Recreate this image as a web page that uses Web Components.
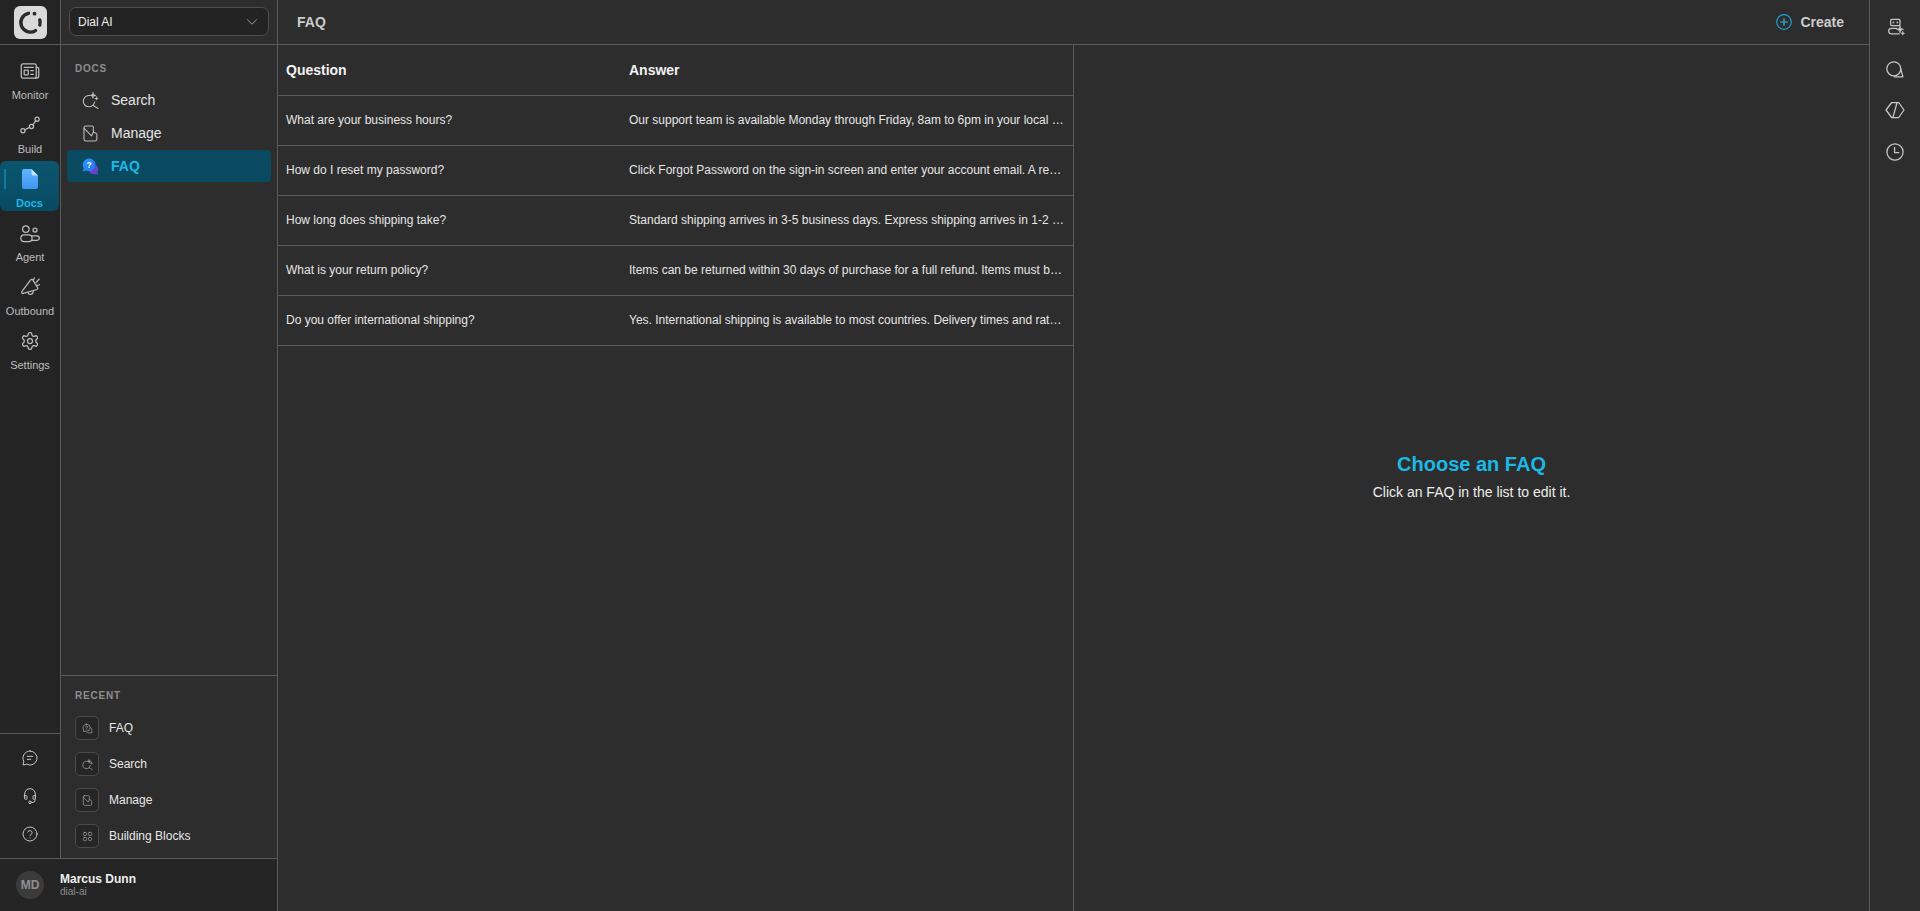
<!DOCTYPE html>
<html lang="en"><head><meta charset="utf-8"><title>FAQ</title>
<style>
html,body{margin:0;height:100%;overflow:hidden;background:#2d2d2d;color:#eee;font-family:"Liberation Sans",Arial,sans-serif}
</style></head><body>
<x-app>
  <x-left slot="left">
    <x-rail slot="rail">
      <x-rail-item icon="monitor">Monitor</x-rail-item>
      <x-rail-item icon="build">Build</x-rail-item>
      <x-rail-item icon="docs" active>Docs</x-rail-item>
      <x-rail-item icon="agent">Agent</x-rail-item>
      <x-rail-item icon="outbound">Outbound</x-rail-item>
      <x-rail-item icon="settings">Settings</x-rail-item>
      <x-rail-foot slot="foot"></x-rail-foot>
    </x-rail>
    <x-panel slot="panel">
      <x-nav-item icon="search">Search</x-nav-item>
      <x-nav-item icon="manage">Manage</x-nav-item>
      <x-nav-item icon="faq" active>FAQ</x-nav-item>
      <x-recent-item slot="recent" icon="chat-q">FAQ</x-recent-item>
      <x-recent-item slot="recent" icon="search">Search</x-recent-item>
      <x-recent-item slot="recent" icon="manage">Manage</x-recent-item>
      <x-recent-item slot="recent" icon="blocks">Building Blocks</x-recent-item>
    </x-panel>
    <x-user slot="user" name="Marcus Dunn" org="dial-ai" initials="MD"></x-user>
  </x-left>
  <x-topbar slot="top" title="FAQ"></x-topbar>
  <x-faq-table slot="table">
    <x-faq-row q="What are your business hours?" a="Our support team is available Monday through Friday, 8am to 6pm in your local time zone, excluding public holidays."></x-faq-row>
    <x-faq-row q="How do I reset my password?" a="Click Forgot Password on the sign-in screen and enter your account email. A reset link will arrive within a few minutes."></x-faq-row>
    <x-faq-row q="How long does shipping take?" a="Standard shipping arrives in 3-5 business days. Express shipping arrives in 1-2 business days after dispatch."></x-faq-row>
    <x-faq-row q="What is your return policy?" a="Items can be returned within 30 days of purchase for a full refund. Items must be unused and in original packaging."></x-faq-row>
    <x-faq-row q="Do you offer international shipping?" a="Yes. International shipping is available to most countries. Delivery times and rates vary by destination."></x-faq-row>
  </x-faq-table>
  <x-empty slot="detail" heading="Choose an FAQ" text="Click an FAQ in the list to edit it."></x-empty>
  <x-right-rail slot="right"></x-right-rail>
</x-app>
<script>
const S='fill="none" stroke="currentColor" stroke-width="1.5" stroke-linecap="round" stroke-linejoin="round"';
const ICONS={
monitor:`<svg viewBox="0 0 24 24" ${S}><rect x="1.5" y="3.5" width="18" height="17" rx="2"/><path d="M19.5 7.5h1.2a1.8 1.8 0 0 1 1.8 1.8v8.7a2.5 2.5 0 0 1-2.5 2.5h-1.5"/><path d="M5 7.5h11"/><rect x="5" y="11" width="5" height="5.5" rx=".5"/><path d="M13 11.5h3M13 16h3"/></svg>`,
build:`<svg viewBox="0 0 24 24" ${S}><circle cx="3.5" cy="18.8" r="2.5"/><circle cx="13.8" cy="13.8" r="2.5"/><circle cx="20.500" cy="5" r="2.500"/><path d="M5.800 17.700l5.700-2.800M15.300 11.800l3.700-4.800"/></svg>`,
docs:`<svg viewBox="0 0 16 20"><defs><linearGradient id="dg" x1="0" y1="0" x2="0" y2="1"><stop offset="0" stop-color="#5fb5ff"/><stop offset="1" stop-color="#3f97f2"/></linearGradient></defs><path d="M2 0h7.5L16 6.5V18a2 2 0 0 1-2 2H2a2 2 0 0 1-2-2V2a2 2 0 0 1 2-2z" fill="url(#dg)"/><path d="M9.500 0L16 6.500h-5a1.500 1.500 0 0 1-1.500-1.500z" fill="#bfe0ff"/></svg>`,
agent:`<svg viewBox="0 0 24 24" ${S}><circle cx="7" cy="7.300" r="3.900"/><circle cx="18" cy="8.400" r="2.400"/><rect x="1" y="14.200" width="13.500" height="8" rx="4"/><path d="M14.500 15.500h6a2.600 2.600 0 0 1 0 5.200h-6"/></svg>`,
outbound:`<svg viewBox="0 0 24 24" ${S}><path d="M12.800 3.500L2.400 17.300a1.500 1.500 0 0 0 1.600 2.400L20.300 15a1.500 1.500 0 0 0 .6-2.500L15.200 3.300a1.500 1.500 0 0 0-2.400.2z"/><path d="M9.500 18.800a3.200 3.200 0 0 0 6.200-1.400"/><path d="M17.200 1l-1 3M23 2.500l-3.500 3.800M23.500 9.300l-3 .7"/></svg>`,
settings:`<svg viewBox="0 0 24 24" ${S}><path d="M12.220 2h-.44a2 2 0 0 0-2 2v.18a2 2 0 0 1-1 1.730l-.43.250a2 2 0 0 1-2 0l-.15-.080a2 2 0 0 0-2.730.730l-.22.380a2 2 0 0 0 .73 2.730l.15.100a2 2 0 0 1 1 1.720v.51a2 2 0 0 1-1 1.740l-.15.090a2 2 0 0 0-.73 2.730l.22.380a2 2 0 0 0 2.730.730l.15-.080a2 2 0 0 1 2 0l.43.250a2 2 0 0 1 1 1.730V20a2 2 0 0 0 2 2h.44a2 2 0 0 0 2-2v-.18a2 2 0 0 1 1-1.730l.43-.250a2 2 0 0 1 2 0l.15.080a2 2 0 0 0 2.730-.730l.22-.390a2 2 0 0 0-.73-2.730l-.15-.080a2 2 0 0 1-1-1.740v-.5a2 2 0 0 1 1-1.740l.15-.090a2 2 0 0 0 .73-2.730l-.22-.380a2 2 0 0 0-2.730-.730l-.15.080a2 2 0 0 1-2 0l-.43-.250a2 2 0 0 1-1-1.730V4a2 2 0 0 0-2-2z"/><circle cx="12" cy="12" r="3"/></svg>`,
search:`<svg viewBox="0 0 24 24" ${S}><path d="M11 5A8 8 0 1 0 17.800 14"/><path d="M15.500 18.700l7 4.500"/><path d="M15.500 .5l1.100 3.200 3.200 1.100-3.200 1.100-1.100 3.200-1.100-3.200-3.200-1.100 3.200-1.100z" fill="currentColor" stroke-width=".7"/><path d="M20.500 6.500l.7 1.900 1.900.7-1.900.7-.7 1.900-.7-1.900-1.900-.7 1.900-.7z" fill="currentColor" stroke-width=".6"/></svg>`,
manage:`<svg viewBox="0 0 24 24" ${S}><path d="M5 1.500h9.500a1.500 1.500 0 0 1 1.500 1.500v7l3.800 1.500a2 2 0 0 1 1.200 2V20a2.500 2.500 0 0 1-2.500 2.500H5.300A2.500 2.500 0 0 1 2.800 20V3.700A2.200 2.200 0 0 1 5 1.500z"/><path d="M3 4.800L13.500 15.500l2.500-5.500"/></svg>`,
faq:`<svg viewBox="0 0 24 24"><defs><linearGradient id="fg" x1="0" y1="0" x2="1" y2="1"><stop offset="0" stop-color="#2a9bff"/><stop offset="1" stop-color="#2a6ff0"/></linearGradient></defs><path d="M15.500 8.500a7.500 7.500 0 0 1 7.500 7.600c0 2-.7 3.600-1.800 4.800L23.500 22.800H15.500A7.200 7.200 0 0 1 15.500 8.500z" fill="#6a42c8"/><path d="M10 .8a9 9 0 1 1-4.300 16.900L1 19 2.400 14.300A9 9 0 0 1 10 .8z" fill="url(#fg)"/><text x="10" y="14" font-family="Liberation Sans" font-size="12" font-weight="700" text-anchor="middle" fill="#fff">?</text></svg>`,
'chat-q':`<svg viewBox="0 0 24 24" ${S}><path d="M10 2.500a7.800 7.800 0 0 1 7.800 7.800A7.800 7.800 0 0 1 10 18H2.500l1.200-3A7.800 7.800 0 0 1 10 2.500z"/><path d="M19.500 10.500a5.800 5.800 0 0 1 2 4.500v6.500H14a6 6 0 0 1-3-1"/><path d="M8 8.500a2 2 0 1 1 3 1.700c-.7.400-1 .8-1 1.500M10 14.300v.1"/></svg>`,
blocks:`<svg viewBox="0 0 24 24" ${S}><rect x="3" y="3" width="7" height="7" rx="3"/><rect x="14" y="3" width="7" height="7" rx="2"/><rect x="3" y="14" width="7" height="7" rx="2"/><rect x="14" y="14" width="7" height="7" rx="3"/></svg>`,
comment:`<svg viewBox="0 0 24 24" ${S}><path d="M12 1.500a10.500 10.500 0 1 1-4.800 19.800L1.500 22.500 2.700 17A10.500 10.500 0 0 1 12 1.500z"/><path d="M8 9.500h8M8 14h5"/></svg>`,
headset:`<svg viewBox="0 0 24 24" ${S} stroke-width="1.300"><path d="M4 15V9a8 8 0 0 1 16 0v6"/><path d="M4 11.500h2.500a1 1 0 0 1 1 1v3.500a1 1 0 0 1-1 1H5a1 1 0 0 1-1-1zM20 11.500h-2.500a1 1 0 0 0-1 1v3.500a1 1 0 0 0 1 1H19a1 1 0 0 0 1-1z"/><path d="M19.500 17v1.500a3 3 0 0 1-3 3H14"/><circle cx="12" cy="21.500" r="2"/></svg>`,
help:`<svg viewBox="0 0 24 24" ${S}><circle cx="12" cy="12" r="10.500"/><path d="M8.800 9a3.300 3.300 0 0 1 6.400 1c0 2.200-3.200 2.600-3.200 4.500M12 18v.1"/></svg>`,
plus:`<svg viewBox="0 0 16 16" fill="none" stroke="#1ea0cf" stroke-width="1.200" stroke-linecap="round"><circle cx="8" cy="8" r="7.300"/><path d="M8 4.500v7M4.500 8h7" stroke="#2fb1e0"/></svg>`,
bot:`<svg viewBox="0 0 24 24" ${S}><rect x="6.800" y="2.800" width="11.200" height="7.500" rx="1.300"/><path d="M10 6.500h.1M14.800 6.500h.1" stroke-width="2"/><path d="M14 13.500H7.800a3.300 3.300 0 0 0 0 6.800H17"/><path d="M18 10.500l1.100 3.200 3.200 1.100-3.200 1.100-1.100 3.200-1.100-3.200-3.200-1.100 3.200-1.100z" fill="currentColor" stroke-width=".7"/><path d="M21.300 17.300l.6 1.700 1.700.6-1.700.6-.6 1.700-.6-1.700-1.700-.6 1.700-.6z" fill="currentColor" stroke-width=".6"/></svg>`,
bubbles:`<svg viewBox="0 0 24 24" ${S}><circle cx="10.600" cy="11.800" r="8.400"/><path d="M18.800 11.500l2.700 10H11"/></svg>`,
code:`<svg viewBox="0 0 24 24" ${S}><path d="M8 3h8.500L22.800 12l-6.300 9H8L1.200 12z"/><path d="M14.500 3L9.500 21"/></svg>`,
clock:`<svg viewBox="0 0 24 24" ${S}><circle cx="12" cy="12" r="9.700"/><path d="M11.500 6.500v6.300h5"/></svg>`,
chevron:`<svg viewBox="0 0 12 12" fill="none" stroke="#9a9a9a" stroke-width="1" stroke-linecap="round" stroke-linejoin="round"><path d="M1.500 3.800L6 8.200l4.500-4.400"/></svg>`,
logo:`<svg viewBox="0 0 33 33"><rect width="33" height="33" rx="6" fill="#d9d9d9"/><g fill="none" stroke="#2a2a2a" stroke-width="3.400" stroke-linecap="round"><path d="M14.500 7.300A9.500 9.500 0 1 0 21.500 24.600"/><path d="M25.800 14A9.500 9.500 0 0 1 25.800 19"/></g><circle cx="20.500" cy="7.700" r="1.900" fill="#2a2a2a"/></svg>`
};
customElements.define('x-icon',class extends HTMLElement{
  connectedCallback(){ if(this.shadowRoot) return; const r=this.attachShadow({mode:'open'});
    const s=this.getAttribute('size')||20;
    r.innerHTML=`<style>:host{display:block;width:${s}px;height:${s}px;flex:none;line-height:0}svg{width:100%;height:100%;display:block}</style>`+(ICONS[this.getAttribute('name')]||'');}
});
class Base extends HTMLElement{
  connectedCallback(){ if(this.shadowRoot) return; this.attachShadow({mode:'open'}).innerHTML=this.render(); }
  a(n,d=''){return this.getAttribute(n)??d;}
}
const reg=(n,f)=>customElements.define(n,class extends Base{render(){return f(this);}});
reg('x-app',()=>`<style>:host{display:grid;grid-template-columns:278px 1fr 51px;grid-template-rows:45px 1fr;height:911px;background:#2d2d2d}
 .left{grid-row:1/3;border-right:1px solid #5a5a5a;min-height:0;display:flex}
 .top{grid-column:2;min-width:0}
 .body{grid-column:2;grid-row:2;display:grid;grid-template-columns:796px 1fr;min-height:0}
 .t{border-right:1px solid #5a5a5a;min-width:0}
 .right{grid-column:3;grid-row:1/3;border-left:1px solid #5a5a5a}
</style>
<div class="left"><slot name="left"></slot></div><div class="top"><slot name="top"></slot></div>
<div class="body"><div class="t"><slot name="table"></slot></div><div><slot name="detail"></slot></div></div>
<div class="right"><slot name="right"></slot></div>`);
reg('x-left',()=>`<style>:host{display:flex;flex-direction:column;flex:1;min-width:0;height:100%}
 .up{flex:1;display:flex;min-height:0}.rail{width:60px;flex:none;display:flex}.pan{flex:1;min-width:0;border-left:1px solid #5a5a5a;display:flex}
 .u{flex:none;height:52px;border-top:1px solid #5a5a5a;background:#242424}</style>
 <div class="up"><div class="rail"><slot name="rail"></slot></div><div class="pan"><slot name="panel"></slot></div></div><div class="u"><slot name="user"></slot></div>`);
reg('x-rail',()=>`<style>:host{display:flex;flex-direction:column;flex:1;background:#242424;min-width:0}
 .logo{height:44px;border-bottom:1px solid #5a5a5a;display:flex;align-items:center;justify-content:center;flex:none}
 .items{flex:1;display:flex;flex-direction:column;gap:4px;padding-top:8px;min-height:0}</style>
 <div class="logo"><x-icon name="logo" size="33"></x-icon></div><div class="items"><slot></slot></div><slot name="foot"></slot>`);
reg('x-rail-item',e=>{const act=e.hasAttribute('active');return `<style>:host{display:block;height:50px;flex:none;position:relative}
 .b{height:50px;display:flex;flex-direction:column;align-items:center;padding-top:8px;box-sizing:border-box;border-radius:6px;color:#bdbdbd;font-size:11px;line-height:13px;gap:8px;${act?'background:linear-gradient(180deg,#0b566f 0%,#084a62 100%);color:#1cb8e6;font-weight:700;margin-right:1px;':''}}
 .bar{position:absolute;left:4px;top:8px;width:1.5px;height:20px;background:#127a9b}
 .i{height:20px;display:flex;align-items:center}
 </style><div class="b">${act?'<span class="bar"></span>':''}<div class="i"><x-icon name="${e.a('icon')}" size="20"></x-icon></div><div><slot></slot></div></div>`});
reg('x-rail-foot',()=>`<style>:host{display:flex;flex-direction:column;gap:22px;align-items:center;border-top:1px solid #5a5a5a;padding-top:16px;height:125px;box-sizing:border-box;flex:none;color:#c4c4c4}</style>
 <x-icon name="comment" size="16"></x-icon><x-icon name="headset" size="16"></x-icon><x-icon name="help" size="16"></x-icon>`);
reg('x-panel',()=>`<style>:host{display:flex;flex-direction:column;flex:1;min-width:0}
 .sel{height:44px;border-bottom:1px solid #5a5a5a;flex:none;display:flex;align-items:center;padding:0 8px}
 .box{flex:1;height:29px;background:#232323;border:1px solid #4d4d4d;border-radius:7px;display:flex;align-items:center;justify-content:space-between;padding:0 10px 0 8px;font-size:12px;color:#eee;box-sizing:border-box;margin-top:-1px}
 .nav{flex:1;padding:17px 6px 0;min-height:0}
 h4,h5{margin:0;font-size:10px;font-weight:700;letter-spacing:.8px;color:#8d8d8d;line-height:14px;padding-left:8px}
 .list{margin-top:8px;display:flex;flex-direction:column;gap:1px}
 .rec{flex:none;height:183px;box-sizing:border-box;border-top:1px solid #5a5a5a;padding:13px 14px 0}
 .rec h5{padding:0}
 .rl{margin-top:13px;display:flex;flex-direction:column;gap:12px}
 </style>
 <div class="sel"><div class="box"><span>Dial AI</span><x-icon name="chevron" size="12"></x-icon></div></div>
 <div class="nav"><h4>DOCS</h4><div class="list"><slot></slot></div></div>
 <div class="rec"><h5>RECENT</h5><div class="rl"><slot name="recent"></slot></div></div>`);
reg('x-nav-item',e=>{const act=e.hasAttribute('active');return `<style>:host{display:block}
 .r{height:32px;display:flex;align-items:center;gap:12px;padding-left:15px;border-radius:4px;font-size:14px;color:#e4e4e4;${act?'background:#0a4a60;color:#1cb8e6;font-weight:700;':''}}</style>
 <div class="r"><span style="color:#bdbdbd;display:block"><x-icon name="${e.a('icon')}" size="17"></x-icon></span><span><slot></slot></span></div>`});
reg('x-recent-item',e=>`<style>:host{display:flex;align-items:center;gap:10px;height:24px;font-size:12px;color:#e8e8e8}
 .b{width:24px;height:24px;box-sizing:border-box;border:1px solid #4a4a4a;border-radius:5px;background:#262626;display:flex;align-items:center;justify-content:center;color:#a8a8a8}</style>
 <div class="b"><x-icon name="${e.a('icon')}" size="11"></x-icon></div><slot></slot>`);
reg('x-user',e=>`<style>:host{display:flex;align-items:center;height:100%;padding-left:16px;gap:16px;box-sizing:border-box}
 .av{width:28px;height:28px;border-radius:50%;background:#3b3b3b;color:#8f8f8f;font-size:12px;font-weight:700;display:flex;align-items:center;justify-content:center}
 .n{font-size:12px;font-weight:700;color:#eee;line-height:14px;margin-top:-1px}.o{font-size:10px;color:#8f8f8f;line-height:12px}</style>
 <div class="av">${e.a('initials')}</div><div><div class="n">${e.a('name')}</div><div class="o">${e.a('org')}</div></div>`);
reg('x-topbar',e=>`<style>:host{display:flex;align-items:center;justify-content:space-between;height:45px;box-sizing:border-box;border-bottom:1px solid #5a5a5a;padding:0 25px 0 19px;font-weight:700;font-size:14px;color:#ccc}
 .c{display:flex;align-items:center;gap:8px}</style><div>${e.a('title')}</div><div class="c"><x-icon name="plus" size="16"></x-icon><span>Create</span></div>`);
reg('x-faq-table',()=>`<style>:host{display:block}
 .h{display:grid;grid-template-columns:343px 1fr;height:51px;box-sizing:border-box;border-bottom:1px solid #5a5a5a;align-items:center;font-size:14px;font-weight:700;color:#f2f2f2}
 .h div{padding-left:8px}</style><div class="h"><div>Question</div><div>Answer</div></div><slot></slot>`);
reg('x-faq-row',e=>`<style>:host{display:grid;grid-template-columns:343px 1fr;height:50px;box-sizing:border-box;border-bottom:1px solid #5a5a5a;padding-bottom:2px;align-items:center;font-size:12px;color:#e6e6e6}
 div{padding:0 8px;white-space:nowrap;overflow:hidden;text-overflow:ellipsis;min-width:0}</style><div>${e.a('q')}</div><div>${e.a('a')}</div>`);
reg('x-empty',e=>`<style>:host{display:flex;flex-direction:column;align-items:center;justify-content:center;height:100%;text-align:center;padding-bottom:2px;box-sizing:border-box}
 h2{margin:0;font-size:20px;line-height:24px;font-weight:700;color:#1cb8e6}p{margin:6px 0 0;font-size:14px;line-height:20px;color:#eee}</style><h2>${e.a('heading')}</h2><p>${e.a('text')}</p>`);
reg('x-right-rail',()=>`<style>:host{display:flex;flex-direction:column;align-items:center;gap:21.700px;padding-top:17px;color:#c8c8c8}</style>
 <x-icon name="bot" size="20"></x-icon><x-icon name="bubbles" size="20"></x-icon><x-icon name="code" size="20"></x-icon><x-icon name="clock" size="20"></x-icon>`);
</script>
</body></html>
